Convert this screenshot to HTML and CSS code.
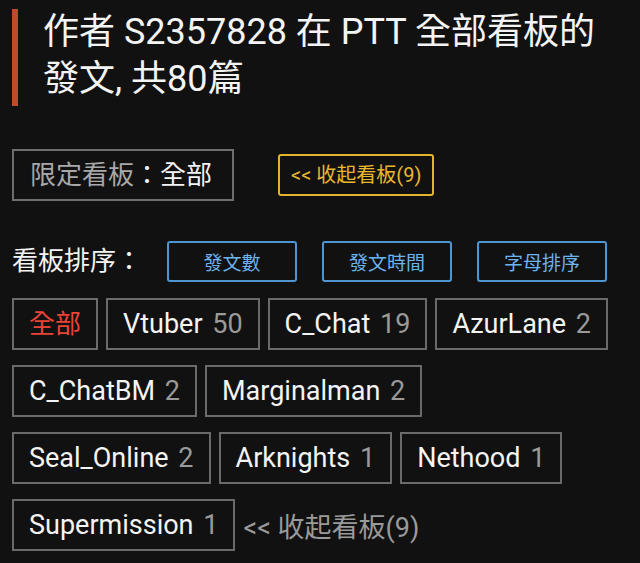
FILE: index.html
```html
<!DOCTYPE html>
<html lang="zh-Hant">
<head>
<meta charset="utf-8">
<link rel="stylesheet" href="styles.css">
</head>
<body>
<div class="page">
  <h1 class="title">作者 S2357828 在 PTT 全部看板的發文, 共80篇</h1>

  <div class="filter-row">
    <div class="filter-box"><span class="muted">限定看板</span>：全部</div>
    <button class="collapse-btn">&lt;&lt; 收起看板(9)</button>
  </div>

  <div class="sort-row">
    <span class="sort-label">看板排序：</span>
    <button class="sort-btn">發文數</button>
    <button class="sort-btn">發文時間</button>
    <button class="sort-btn">字母排序</button>
  </div>

  <div class="tags">
    <span class="tag tag-active">全部</span>
    <span class="tag">Vtuber <span class="count">50</span></span>
    <span class="tag">C_Chat <span class="count">19</span></span>
    <span class="tag">AzurLane <span class="count">2</span></span>
    <span class="tag">C_ChatBM <span class="count">2</span></span>
    <span class="tag">Marginalman <span class="count">2</span></span>
    <span class="tag">Seal_Online <span class="count">2</span></span>
    <span class="tag">Arknights <span class="count">1</span></span>
    <span class="tag">Nethood <span class="count">1</span></span>
    <span class="tag">Supermission <span class="count">1</span></span>
    <span class="collapse-link">&lt;&lt; 收起看板(9)</span>
  </div>
</div>
</body>
</html>
```

FILE: styles.css
```css
html, body {
  margin: 0;
  padding: 0;
  background: #111111;
}

body {
  font-family: Roboto, "Noto Sans CJK TC", sans-serif;
  color: #f2f2f2;
}

.page {
  padding: 9px 18px 0 12px;
  width: 640px;
  box-sizing: border-box;
}

.title {
  margin: 0;
  font-size: 36px;
  font-weight: 400;
  line-height: 47px;
  border-left: 6px solid #c04a2c;
  padding: 0 22px 3px 25px;
  color: #f4f4f4;
}

.filter-row {
  display: flex;
  align-items: center;
  margin-top: 43px;
  gap: 44px;
}

.filter-box {
  border: 2px solid #6e6e6e;
  font-size: 26px;
  line-height: 48px;
  padding: 0 20px 0 16px;
  color: #f4f4f4;
}

.muted {
  color: #a8a8a8;
}

.collapse-btn {
  font-family: Roboto, "Noto Sans CJK TC", sans-serif;
  background: transparent;
  border: 2px solid #e3b22f;
  border-radius: 3px;
  color: #e8b830;
  font-size: 20px;
  line-height: 38px;
  padding: 0 11px 0 11px;
  margin: 0;
}

.sort-row {
  display: flex;
  align-items: center;
  margin-top: 40px;
  gap: 25px;
}

.sort-label {
  font-size: 26px;
  line-height: 41px;
  color: #f4f4f4;
}

.sort-btn {
  font-family: Roboto, "Noto Sans CJK TC", sans-serif;
  width: 130px;
  height: 41px;
  margin: 0;
  padding: 0;
  background: transparent;
  border: 2px solid #4f95d2;
  border-radius: 3px;
  color: #6cb4ee;
  font-size: 19px;
}

.tags {
  display: flex;
  flex-wrap: wrap;
  align-items: center;
  column-gap: 8px;
  row-gap: 15px;
  margin-top: 16px;
}

.tag {
  border: 2px solid #6a6a6a;
  font-size: 27px;
  line-height: 48px;
  padding: 0 15px;
  color: #f4f4f4;
}

.tag-active {
  color: #ea4437;
  font-size: 26px;
  line-height: 48px;
}

.count {
  color: #9a9a9a;
  margin-left: 3px;
}

.collapse-link {
  font-size: 27px;
  color: #9a9a9a;
}
```
